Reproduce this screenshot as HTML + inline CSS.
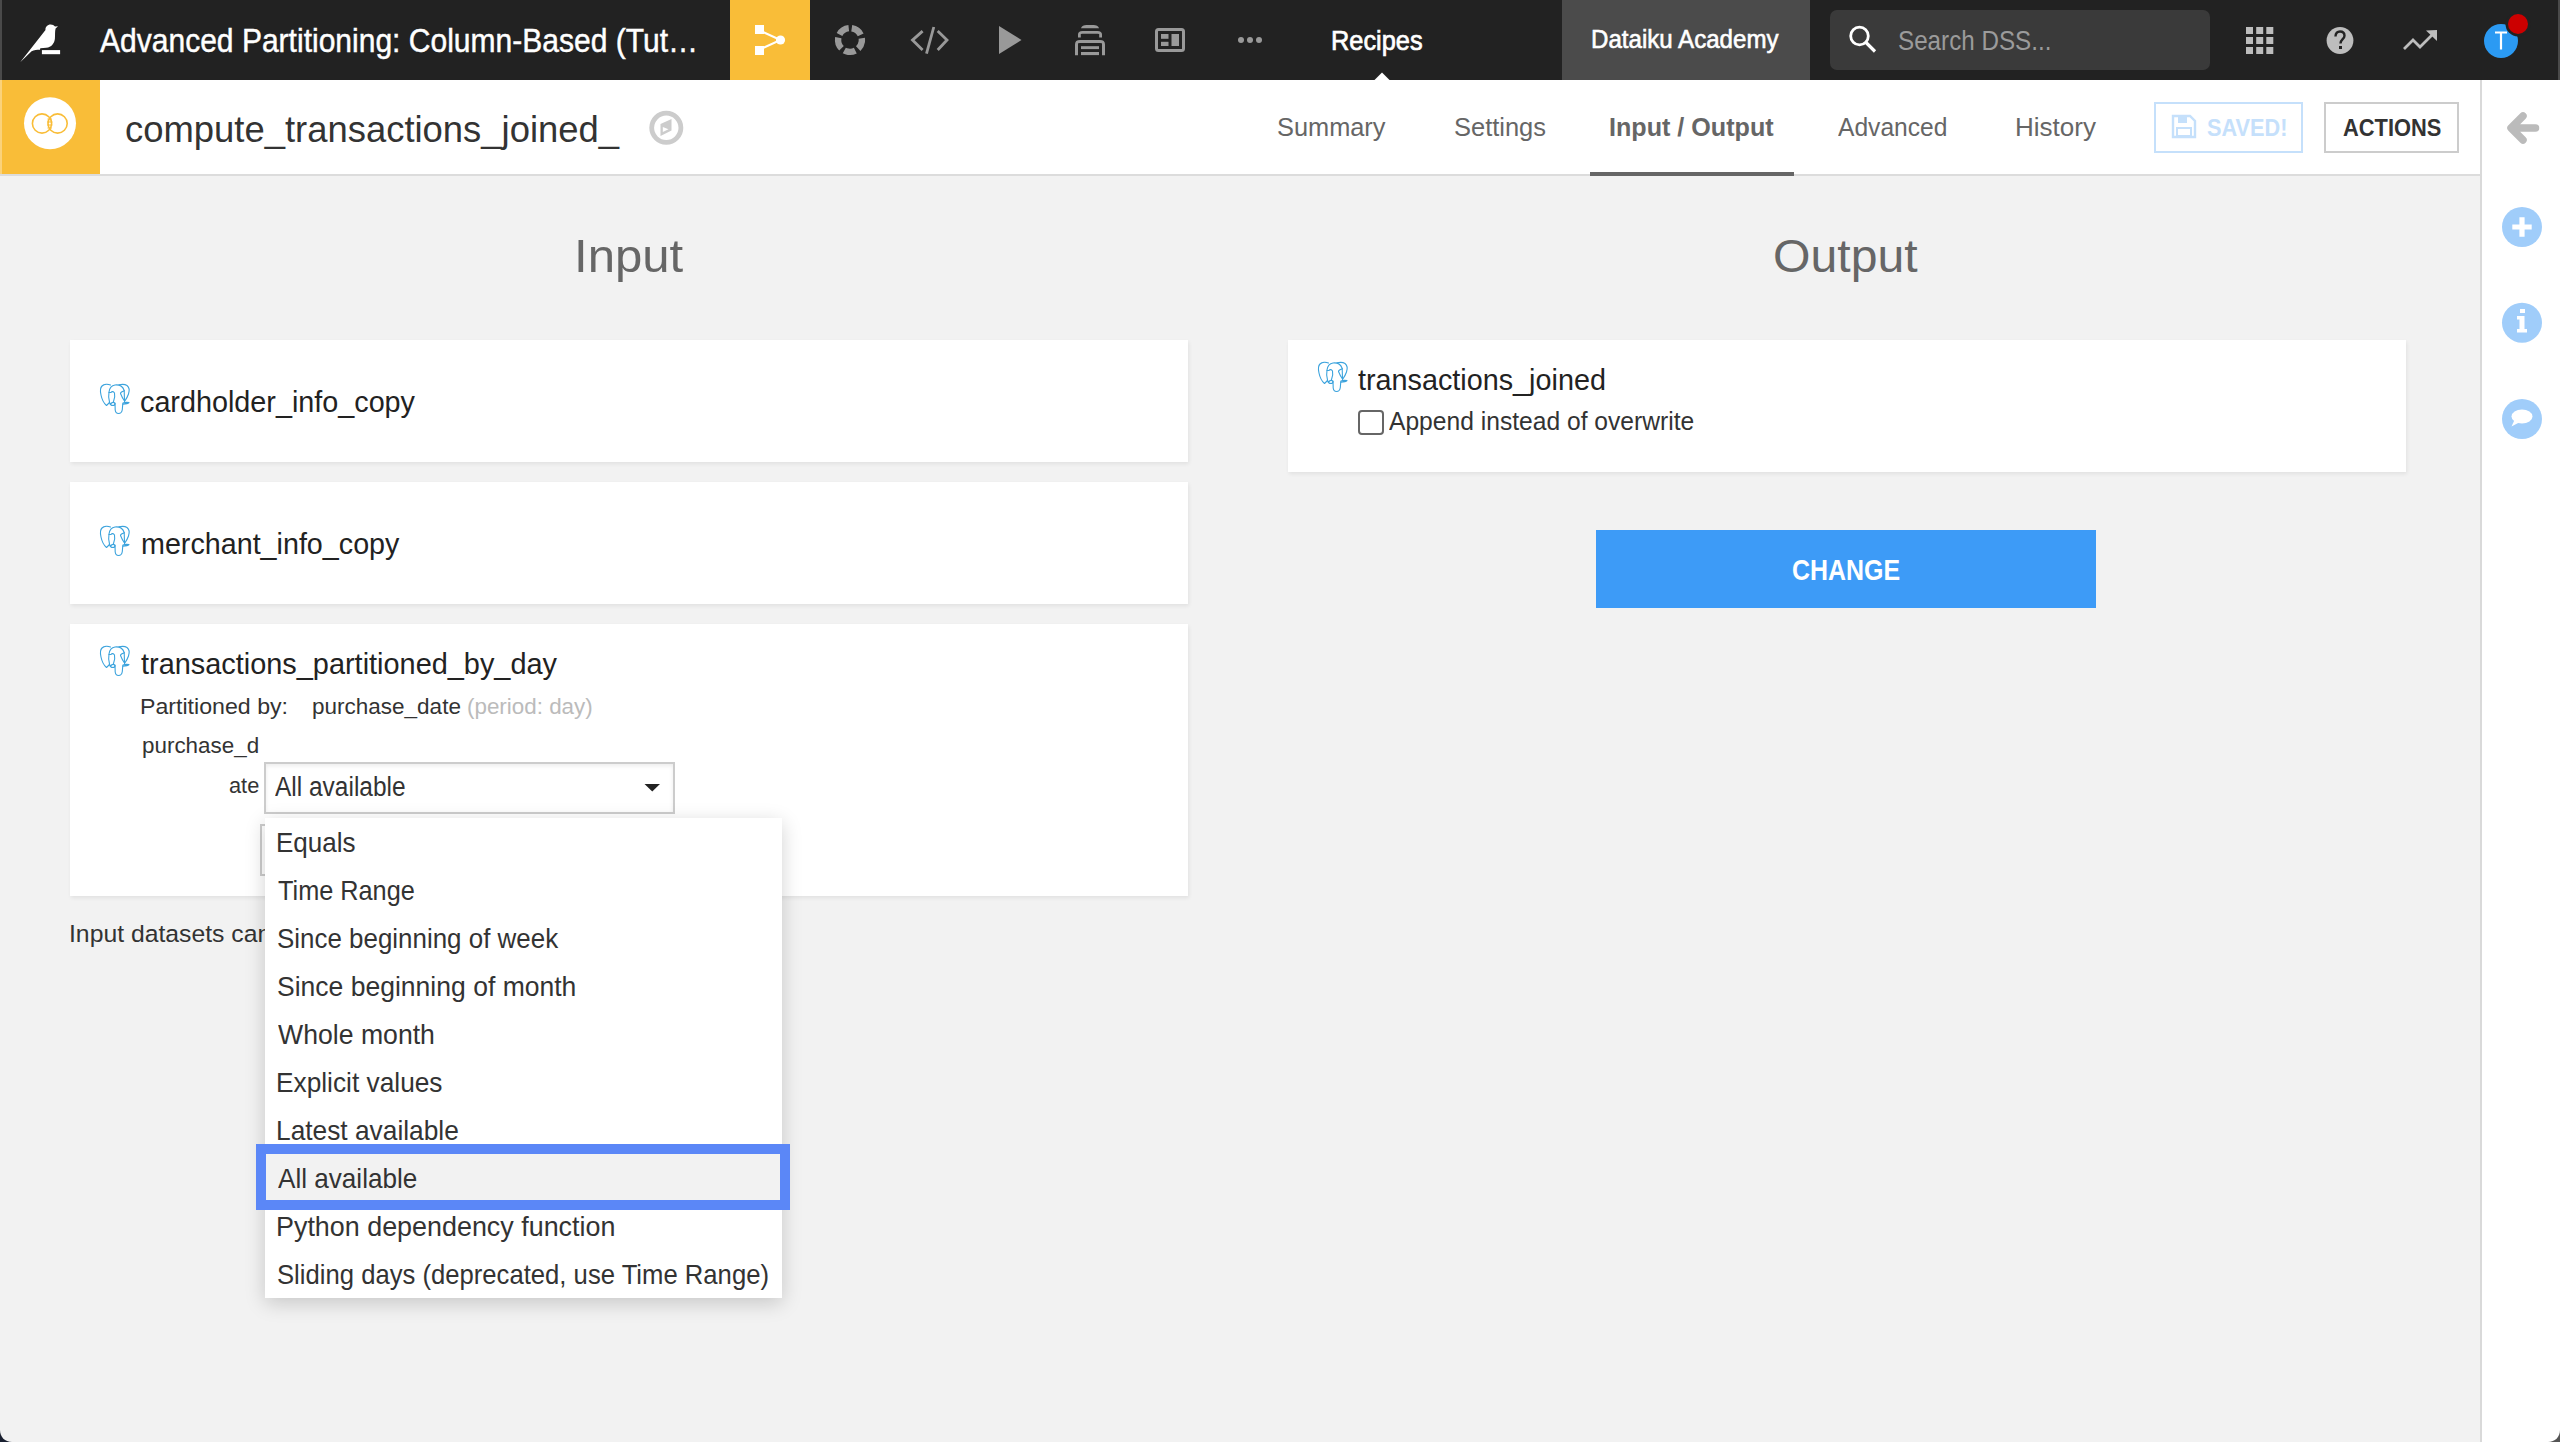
<!DOCTYPE html>
<html><head><meta charset="utf-8"><title>DSS</title>
<style>
html,body{margin:0;padding:0;width:2560px;height:1442px;overflow:hidden;background:#f2f2f2;font-family:"Liberation Sans",sans-serif}
.a{position:absolute}
.tx{position:absolute;white-space:pre;line-height:1;transform-origin:0 0}
.card{position:absolute;background:#fff;box-shadow:1px 2px 4px rgba(0,0,0,.07)}
svg{position:absolute;overflow:visible}
</style></head><body>
<!-- top nav -->
<div class="a" style="left:0;top:0;width:2560px;height:80px;background:#222"></div>
<div class="a" style="left:0;top:0;width:2px;height:80px;background:#4a4a4a"></div>
<div class="a" style="left:2558px;top:0;width:2px;height:80px;background:#4a4a4a"></div>
<!-- bird logo -->
<svg style="left:0;top:0" width="100" height="80" viewBox="0 0 100 80">
 <path d="M20.2,62.3 L45.5,30 C45,27 47.5,24.4 50.7,24.4 C52.5,24.4 54,25.2 55,26.5 L58,26.3 L55.6,28.4 C54.8,31 55.2,35 54.9,38.8 C54.5,43 51.5,47.5 46.2,47.8 L40.3,48.2 L40,49.7 C37,49.8 34,50 31.6,51.3 Z" fill="#fff"/>
 <rect x="41.9" y="50.1" width="18.2" height="4.1" fill="#fff"/>
</svg>
<!-- yellow flow block -->
<div class="a" style="left:730px;top:0;width:80px;height:80px;background:#f9bd38"></div>
<svg style="left:730px;top:0" width="80" height="80" viewBox="0 0 80 80">
 <rect x="25" y="25" width="9" height="9" fill="#fff"/>
 <rect x="25" y="46" width="9" height="9" fill="#fff"/>
 <path d="M33,32 L50.5,40 L33,48" stroke="#fff" stroke-width="2" fill="none"/>
 <circle cx="50.5" cy="40" r="4.6" fill="#fff"/>
</svg>
<!-- ring icon -->
<svg style="left:830px;top:20px" width="40" height="40" viewBox="0 0 40 40">
 <circle cx="20" cy="20" r="11.9" stroke="#999" stroke-width="6.4" fill="none" stroke-dasharray="11.45 3.5" transform="rotate(-81.6 20 20)"/>
</svg>
<!-- code icon -->
<svg style="left:910px;top:24px" width="40" height="32" viewBox="0 0 40 32">
 <path d="M12.6,7.1 L2.5,16.1 L12.6,25.9" stroke="#999" stroke-width="2.8" fill="none"/>
 <path d="M27.7,7 L37,16 L27.7,26" stroke="#999" stroke-width="2.8" fill="none"/>
 <path d="M23.8,3 L16.5,29.6" stroke="#999" stroke-width="2.8" fill="none"/>
</svg>
<!-- play -->
<svg style="left:999px;top:26px" width="24" height="30" viewBox="0 0 24 30">
 <path d="M0,0 L22.5,14 L0,28 Z" fill="#999"/>
</svg>
<!-- stack icon -->
<svg style="left:1073px;top:22px" width="34" height="36" viewBox="0 0 34 36">
 <path d="M8,6.2 C9,3.5 11,3 17,3 C23,3 25,3.5 26,6.2 Z" fill="#999"/>
 <path d="M6.4,15.5 L6.4,12.5 C6.4,10.5 7.5,10.4 9.5,10.4 L24.5,10.4 C26.5,10.4 27.6,10.5 27.6,12.5 L27.6,15.5" stroke="#999" stroke-width="2.8" fill="none"/>
 <path d="M3.5,33.3 L3.5,22.5 C3.5,20 4.5,19.6 7,19.6 L27,19.6 C29.5,19.6 30.5,20 30.5,22.5 L30.5,33.3" stroke="#999" stroke-width="3" fill="none"/>
 <rect x="8" y="24.2" width="18" height="2.9" fill="#999"/>
 <rect x="8" y="30" width="18" height="3.1" fill="#999"/>
</svg>
<!-- dashboard icon -->
<svg style="left:1153px;top:26px" width="34" height="28" viewBox="0 0 34 28">
 <rect x="3.5" y="3.5" width="27" height="21" rx="2" stroke="#999" stroke-width="3" fill="none"/>
 <rect x="8" y="8" width="7.5" height="4.8" fill="#999"/>
 <rect x="8" y="15.8" width="7.5" height="4.2" fill="#999"/>
 <rect x="18.5" y="8" width="7.5" height="12" fill="#999"/>
</svg>
<!-- dots -->
<svg style="left:1236px;top:36px" width="28" height="8" viewBox="0 0 28 8">
 <circle cx="5" cy="4" r="3" fill="#999"/><circle cx="14" cy="4" r="3" fill="#999"/><circle cx="23" cy="4" r="3" fill="#999"/>
</svg>
<!-- recipes triangle -->
<svg style="left:1372px;top:71px" width="20" height="10" viewBox="0 0 20 10">
 <path d="M2,9.5 L10,1.5 L18,9.5 Z" fill="#fff"/>
</svg>
<!-- academy -->
<div class="a" style="left:1562px;top:0;width:248px;height:80px;background:#4b4b4b"></div>
<!-- search -->
<div class="a" style="left:1830px;top:10px;width:380px;height:60px;background:#3a3a3a;border-radius:7px"></div>
<svg style="left:1846px;top:24px" width="34" height="32" viewBox="0 0 34 32">
 <circle cx="13.5" cy="12" r="8.8" stroke="#fff" stroke-width="2.8" fill="none"/>
 <path d="M19.5,18 L29,27.5" stroke="#fff" stroke-width="3.2"/>
</svg>
<!-- grid -->
<svg style="left:2246px;top:27px" width="28" height="28" viewBox="0 0 28 28" fill="#bdbdbd">
 <rect x="0" y="0" width="7" height="7"/><rect x="10.2" y="0" width="7" height="7"/><rect x="20.3" y="0" width="7" height="7"/>
 <rect x="0" y="10" width="7" height="7"/><rect x="10.2" y="10" width="7" height="7"/><rect x="20.3" y="10" width="7" height="7"/>
 <rect x="0" y="20" width="7" height="7"/><rect x="10.2" y="20" width="7" height="7"/><rect x="20.3" y="20" width="7" height="7"/>
</svg>
<!-- help -->
<svg style="left:2320px;top:20px" width="40" height="40" viewBox="0 0 40 40">
 <circle cx="20" cy="20.5" r="13.4" fill="#bdbdbd"/>
 <path d="M15.5,16.5 C15.5,13 17.5,11.5 20,11.5 C22.8,11.5 24.5,13.2 24.5,15.8 C24.5,19 20.5,19.5 20.5,23.5" stroke="#222" stroke-width="2.4" fill="none"/>
 <rect x="19" y="26" width="3" height="3" fill="#222"/>
</svg>
<!-- trend -->
<svg style="left:2400px;top:26px" width="40" height="28" viewBox="0 0 40 28">
 <path d="M4,23 L13,14 L20,21 L32,9" stroke="#bdbdbd" stroke-width="2.8" fill="none"/>
 <path d="M26,4.5 L37,4 L37,15 Z" fill="#bdbdbd"/>
</svg>
<!-- avatar -->
<svg style="left:2476px;top:6px" width="70" height="64" viewBox="0 0 70 64">
 <circle cx="25" cy="35" r="17" fill="#2b9af3"/>
 <path d="M19,26.5 L31,26.5 M25,26.5 L25,43.5" stroke="#fff" stroke-width="2.2"/>
 <circle cx="42" cy="18" r="12.5" fill="#222"/>
 <circle cx="42" cy="18" r="10" fill="#cc0000"/>
</svg>

<!-- header -->
<div class="a" style="left:0;top:80px;width:2480px;height:94px;background:#fff"></div>
<div class="a" style="left:0;top:174px;width:2480px;height:2px;background:#dcdcdc"></div>
<div class="a" style="left:0;top:80px;width:100px;height:94px;background:#f9bd38"></div>
<div class="a" style="left:0;top:80px;width:2px;height:94px;background:#fbd27a"></div>
<svg style="left:0;top:80px" width="100" height="94" viewBox="0 0 100 94">
 <circle cx="50" cy="43.2" r="26" fill="#fff"/>
 <circle cx="42" cy="43.5" r="9.6" stroke="#f9bd38" stroke-width="1.6" fill="none"/>
 <circle cx="57.6" cy="43.5" r="9.6" stroke="#f9bd38" stroke-width="1.6" fill="none"/>
 <path d="M47.5,39 L52,39 M47,42 L52.5,42 M47,45 L52.5,45 M47.5,48 L52,48" stroke="#f9bd38" stroke-width="1.2"/>
</svg>
<svg style="left:646px;top:108px" width="40" height="40" viewBox="0 0 40 40">
 <circle cx="20.3" cy="19.8" r="14.6" stroke="#ccc" stroke-width="4.8" fill="none"/>
 <path d="M14.5,16 L25.5,11 L25.5,22.5 L14.5,28 Z" fill="#ccc"/>
 <path d="M16.8,19 L22.5,21.3 L16.8,24 Z" fill="#fff"/>
</svg>
<div class="a" style="left:1590px;top:172px;width:204px;height:3.5px;background:#666"></div>
<div class="a" style="left:2154px;top:102px;width:145px;height:47px;border:2px solid #c5e0fb"></div>
<svg style="left:2170px;top:114px" width="28" height="26" viewBox="0 0 28 26">
 <path d="M3,2 L20,2 L25,7 L25,23 L3,23 Z" stroke="#c5e0fb" stroke-width="2.4" fill="none"/>
 <rect x="8" y="3" width="9" height="6" fill="#c5e0fb"/>
 <rect x="7" y="14" width="14" height="8" stroke="#c5e0fb" stroke-width="2" fill="none"/>
</svg>
<div class="a" style="left:2324px;top:102px;width:131px;height:47px;border:2px solid #ccc"></div>

<!-- right sidebar -->
<div class="a" style="left:2480px;top:80px;width:80px;height:1362px;background:#fff"></div>
<div class="a" style="left:2480px;top:80px;width:2px;height:1362px;background:#d9d9d9"></div>
<svg style="left:2504px;top:110px" width="36" height="36" viewBox="0 0 36 36">
 <path d="M19,6 L7,18 L19,30 M8,18 L31.5,18" stroke="#bbb" stroke-width="7.5" stroke-linecap="round" stroke-linejoin="round" fill="none"/>
</svg>
<svg style="left:2500px;top:205px" width="44" height="44" viewBox="0 0 44 44">
 <circle cx="22" cy="22" r="20" fill="#a0cdfa"/>
 <path d="M22,12.3 L22,31.7 M12.3,22 L31.7,22" stroke="#fff" stroke-width="5.2" stroke-linecap="butt"/>
</svg>
<svg style="left:2500px;top:301px" width="44" height="44" viewBox="0 0 44 44">
 <circle cx="22" cy="21.7" r="20" fill="#a0cdfa"/>
 <rect x="20" y="8" width="5" height="4" fill="#fff"/>
 <path d="M17,15 L24.5,15 L24.5,28 L27,28 L27,31.5 L17,31.5 L17,28 L19.5,28 L19.5,18.5 L17,18.5 Z" fill="#fff"/>
</svg>
<svg style="left:2500px;top:397px" width="44" height="44" viewBox="0 0 44 44">
 <circle cx="22" cy="22" r="20" fill="#a0cdfa"/>
 <ellipse cx="22" cy="19.5" rx="10.5" ry="7" fill="#fff"/>
 <path d="M14.5,23 L11.5,29.5 L20,25 Z" fill="#fff"/>
</svg>

<!-- main cards -->
<div class="card" style="left:70px;top:340px;width:1118px;height:122px"></div>
<div class="card" style="left:70px;top:482px;width:1118px;height:122px"></div>
<div class="card" style="left:70px;top:624px;width:1118px;height:272px"></div>
<div class="card" style="left:1288px;top:340px;width:1118px;height:132px"></div>

<!-- change button -->
<div class="a" style="left:1596px;top:530px;width:500px;height:78px;background:#3d9bf7"></div>
<!-- checkbox -->
<div class="a" style="left:1358px;top:410px;width:21.5px;height:21px;border:2px solid #666;border-radius:4px;background:#fff"></div>
<!-- elephants -->
<svg style="left:100px;top:384px" width="30" height="30" viewBox="4 4 30 30"><use href="#eleph"/></svg>
<svg style="left:100px;top:526px" width="30" height="30" viewBox="4 4 30 30"><use href="#eleph"/></svg>
<svg style="left:100px;top:646px" width="30" height="30" viewBox="4 4 30 30"><use href="#eleph"/></svg>
<svg style="left:1318px;top:362px" width="30" height="30" viewBox="4 4 30 30"><use href="#eleph"/></svg>
<svg width="0" height="0" style="left:0;top:0"><defs>
 <g id="eleph" stroke="#3ca3dd" stroke-width="1.1" fill="none" stroke-linecap="round" stroke-linejoin="round">
  <path d="M14.5,5 C12,4 8,4 6,6 C4,8 4.3,12 5,15 C5.8,19 7.5,23 10.5,25.5 C11.5,24.5 12.5,23.5 13.5,22.5"/>
  <path d="M13.5,22 C12.5,19 12.5,15 13,12 C13.5,8 15,5.5 19,5 C23.5,4.5 27,7 28.2,10.5"/>
  <path d="M23,4.8 C26,4.2 29,4.2 31,5.5 C33.5,7.5 33.5,11 32.5,14 C31.5,17 30,19.5 28.5,21.5"/>
  <path d="M28.2,10.5 L28.5,21"/>
  <path d="M28,11 C26,11.5 24.5,12.5 24.5,13.5 C25.5,16 27,19 28.5,21"/>
  <path d="M13,12.5 L15,12.5 C16,11 17.5,11.5 18.5,13 C19,15 18.8,18 17.5,21.5"/>
  <path d="M13.5,22.5 C14,24.5 15,25.5 17,25.5 C18.5,25.5 19,24.5 19,23.5 C18,22 16.5,22 15,23.5"/>
  <path d="M19,23 L19.2,30 C19.5,32.5 21,33.5 22.5,33.5 C24.5,33.5 26,32 26.3,29.5 L26.8,23.5"/>
  <path d="M27,23 C28,22.5 31,22.3 33,22.5 C32,23.5 30,24 27,24.2"/>
 </g></defs></svg>

<div class="tx" id="title" style="left:100.00px;top:23.65px;font-size:33.5px;color:#fff;font-weight:400;transform:scaleX(0.8963);-webkit-text-stroke:0.45px #fff;">Advanced Partitioning: Column-Based (Tut…</div>
<div class="tx" id="recipes" style="left:1331.16px;top:26.64px;font-size:27.6px;color:#fff;font-weight:400;transform:scaleX(0.9185);-webkit-text-stroke:0.7px #fff;">Recipes</div>
<div class="tx" id="academy" style="left:1591.15px;top:25.99px;font-size:26px;color:#fff;font-weight:400;transform:scaleX(0.9268);-webkit-text-stroke:0.6px #fff;">Dataiku Academy</div>
<div class="tx" id="search" style="left:1898.14px;top:27.30px;font-size:28px;color:#9b9b9b;font-weight:400;transform:scaleX(0.8647);">Search DSS...</div>
<div class="tx" id="compute" style="left:124.52px;top:110.68px;font-size:37px;color:#333;font-weight:400;transform:scaleX(0.9844);">compute_transactions_joined_</div>
<div class="tx" id="summary" style="left:1276.52px;top:114.49px;font-size:26px;color:#666;font-weight:400;transform:scaleX(0.9752);">Summary</div>
<div class="tx" id="settings" style="left:1454.02px;top:114.49px;font-size:26px;color:#666;font-weight:400;transform:scaleX(0.9791);">Settings</div>
<div class="tx" id="io" style="left:1609.03px;top:114.49px;font-size:26px;color:#666;font-weight:700;transform:scaleX(0.9663);">Input / Output</div>
<div class="tx" id="advanced" style="left:1838.00px;top:114.49px;font-size:26px;color:#666;font-weight:400;transform:scaleX(0.9459);">Advanced</div>
<div class="tx" id="history" style="left:2015.00px;top:114.49px;font-size:26px;color:#666;font-weight:400;transform:scaleX(1.0013);">History</div>
<div class="tx" id="saved" style="left:2206.50px;top:116.26px;font-size:24.5px;color:#c5e0fb;font-weight:700;transform:scaleX(0.8861);">SAVED!</div>
<div class="tx" id="actions" style="left:2343.00px;top:116.26px;font-size:24.5px;color:#333;font-weight:700;transform:scaleX(0.8916);">ACTIONS</div>
<div class="tx" id="input" style="left:573.82px;top:231.72px;font-size:47px;color:#666;font-weight:400;transform:scaleX(1.0450);">Input</div>
<div class="tx" id="output" style="left:1773.45px;top:232.22px;font-size:47px;color:#666;font-weight:400;transform:scaleX(1.0249);">Output</div>
<div class="tx" id="ds1" style="left:139.51px;top:388.45px;font-size:29px;color:#222;font-weight:400;transform:scaleX(0.9917);">cardholder_info_copy</div>
<div class="tx" id="ds2" style="left:140.81px;top:530.45px;font-size:29px;color:#222;font-weight:400;transform:scaleX(0.9894);">merchant_info_copy</div>
<div class="tx" id="ds3" style="left:140.50px;top:650.45px;font-size:29px;color:#222;font-weight:400;transform:scaleX(0.9963);">transactions_partitioned_by_day</div>
<div class="tx" id="partby" style="left:140.27px;top:695.96px;font-size:22.5px;color:#333;font-weight:400;transform:scaleX(1.0291);">Partitioned by:</div>
<div class="tx" id="pdate" style="left:312.20px;top:695.96px;font-size:22.5px;color:#333;font-weight:400;transform:scaleX(1.0003);">purchase_date</div>
<div class="tx" id="period" style="left:466.90px;top:695.96px;font-size:22.5px;color:#bbb;font-weight:400;transform:scaleX(0.9951);">(period: day)</div>
<div class="tx" id="pd" style="left:142.40px;top:735.16px;font-size:22.5px;color:#333;font-weight:400;transform:scaleX(0.9959);">purchase_d</div>
<div class="tx" id="ate" style="left:229.40px;top:775.46px;font-size:22.5px;color:#333;font-weight:400;transform:scaleX(0.9686);">ate</div>
<div class="tx" id="dsout" style="left:1358.20px;top:365.65px;font-size:29px;color:#222;font-weight:400;transform:scaleX(0.9921);">transactions_joined</div>
<div class="tx" id="append" style="left:1389.10px;top:408.54px;font-size:25px;color:#333;font-weight:400;transform:scaleX(0.9848);">Append instead of overwrite</div>
<div class="tx" id="change" style="left:1792.17px;top:554.81px;font-size:30px;color:#fff;font-weight:700;transform:scaleX(0.8313);">CHANGE</div>

<!-- select -->
<div class="a" style="left:264px;top:762px;width:407px;height:48px;border:2px solid #ccc;background:#fff;box-shadow:inset 0 2px 4px rgba(0,0,0,.08)"></div>
<svg style="left:640px;top:780px" width="24" height="14" viewBox="0 0 24 14">
 <path d="M4.5,4 L20,4 L12.25,11.5 Z" fill="#222"/>
</svg>
<div class="a" style="left:260px;top:824px;width:120px;height:48px;border:2px solid #ccc;background:#fff"></div>
<div class="tx" id="selval" style="left:275.00px;top:774.15px;font-size:27px;color:#333;font-weight:400;transform:scaleX(0.9066);">All available</div>
<div class="tx" id="note" style="left:69.18px;top:922.26px;font-size:24.5px;color:#333;font-weight:400;transform:scaleX(1.0099);">Input datasets can only be partitioned</div>

<!-- dropdown -->
<div class="a" style="left:265px;top:818px;width:517px;height:480px;background:#fff;box-shadow:0 5px 19px rgba(0,0,0,.18)"></div>
<div class="a" style="left:256px;top:1144px;width:514px;height:46px;border:10px solid #5b87f7;background:#f2f2f2"></div>
<div class="tx" id="item0" style="left:275.84px;top:829.30px;font-size:28px;color:#333;font-weight:400;transform:scaleX(0.9296);">Equals</div>
<div class="tx" id="item1" style="left:277.70px;top:877.30px;font-size:28px;color:#333;font-weight:400;transform:scaleX(0.9033);">Time Range</div>
<div class="tx" id="item2" style="left:276.77px;top:925.30px;font-size:28px;color:#333;font-weight:400;transform:scaleX(0.9261);">Since beginning of week</div>
<div class="tx" id="item3" style="left:276.75px;top:973.30px;font-size:28px;color:#333;font-weight:400;transform:scaleX(0.9473);">Since beginning of month</div>
<div class="tx" id="item4" style="left:277.70px;top:1021.30px;font-size:28px;color:#333;font-weight:400;transform:scaleX(0.9511);">Whole month</div>
<div class="tx" id="item5" style="left:275.82px;top:1069.30px;font-size:28px;color:#333;font-weight:400;transform:scaleX(0.9386);">Explicit values</div>
<div class="tx" id="item6" style="left:275.82px;top:1117.30px;font-size:28px;color:#333;font-weight:400;transform:scaleX(0.9396);">Latest available</div>
<div class="tx" id="item7" style="left:277.70px;top:1165.30px;font-size:28px;color:#333;font-weight:400;transform:scaleX(0.9325);">All available</div>
<div class="tx" id="item8" style="left:275.78px;top:1213.30px;font-size:28px;color:#333;font-weight:400;transform:scaleX(0.9605);">Python dependency function</div>
<div class="tx" id="item9" style="left:276.78px;top:1261.30px;font-size:28px;color:#333;font-weight:400;transform:scaleX(0.9162);">Sliding days (deprecated, use Time Range)</div>

<!-- window corners -->
<svg style="left:0;top:1430px" width="12" height="12" viewBox="0 0 12 12"><path d="M0,0 C0,7 5,12 12,12 L0,12 Z" fill="#1a2030"/></svg>
<svg style="left:2548px;top:1430px" width="12" height="12" viewBox="0 0 12 12"><path d="M12,0 C12,7 7,12 0,12 L12,12 Z" fill="#555"/></svg>
</body></html>
